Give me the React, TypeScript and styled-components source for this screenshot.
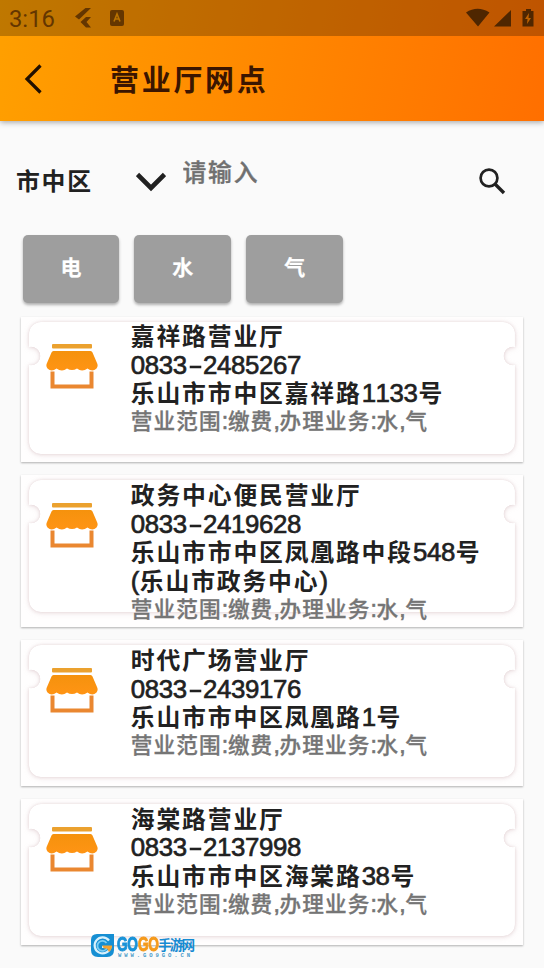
import React from "react";
import styled, { createGlobalStyle } from "styled-components";

const GlobalStyle = createGlobalStyle`
  *, *::before, *::after { box-sizing: border-box; }
  body {
    margin: 0;
    background: #fafafa;
    color: #212121;
    font-family: "Liberation Sans", "Noto Sans CJK SC", sans-serif;
  }
  button { font: inherit; border: 0; padding: 0; background: none; color: inherit; }
`;

const Screen = styled.main`
  width: 544px;
  height: 968px;
  overflow: hidden;
  display: flex;
  flex-direction: column;
`;

const Header = styled.header`
  flex: none;
  height: 121px;
  background: linear-gradient(102deg, #ffa000 0%, #ff6f00 100%);
  box-shadow: 0 1px 6px rgba(0, 0, 0, 0.38);
`;

const StatusBar = styled.div`
  height: 36px;
  padding: 0 9px 0 9px;
  display: flex;
  align-items: center;
  background: rgba(0, 0, 0, 0.25);
  color: #643600;
`;

const Clock = styled.span`
  font: 400 23.8px/36px Roboto, sans-serif;
  width: 66px;
  padding-top: 2px;
`;

const StatusIcons = styled.div<{ $end?: boolean }>`
  display: flex;
  align-items: center;
  gap: ${(p) => (p.$end ? 0 : 18)}px;
  margin-left: ${(p) => (p.$end ? "auto" : 0)};
  color: ${(p) => (p.$end ? "#4f2600" : "#643600")};
  svg { display: block; }
`;

const TitleBar = styled.div`
  height: 85px;
  display: flex;
  align-items: center;
  padding-left: 24px;
`;

const BackButton = styled.button`
  width: 86px;
  display: flex;
`;

const Title = styled.h1`
  margin: 0;
  font: 700 29px/40px "Noto Sans CJK SC", sans-serif;
  letter-spacing: 2.7px;
  color: #3b1500;
  padding-bottom: 2px;
`;

const Filters = styled.section`
  flex: none;
  height: 113.5px;
  padding: 0 38px 0 16px;
  display: flex;
  align-items: center;
`;

const District = styled.button`
  display: flex;
  align-items: center;
  width: 166.5px;
  gap: 43px;
  padding-top: 4px;
  font: 700 23.8px/36px "Noto Sans CJK SC", sans-serif;
  letter-spacing: 1.8px;
  svg { margin-top: 4px; }
`;

const SearchInput = styled.input`
  flex: 1;
  min-width: 0;
  height: 36px;
  margin-bottom: 14.5px;
  padding: 0;
  border: 0;
  outline: 0;
  background: none;
  font: 500 23.8px/36px "Noto Sans CJK SC", sans-serif;
  letter-spacing: 1.8px;
  &::placeholder { color: #707070; opacity: 1; -webkit-text-stroke: 0.4px #707070; }
`;

const SearchButton = styled.button`
  display: flex;
  margin-top: 8px;
`;

const Categories = styled.nav`
  flex: none;
  display: flex;
  gap: 15px;
  padding-left: 22.5px;
  height: 82px;
`;

const CategoryButton = styled.button`
  width: 96.9px;
  height: 68px;
  border-radius: 5px;
  background: #9e9e9e;
  color: #fff;
  font: 700 21px/62px "Noto Sans CJK SC", sans-serif;
  padding-bottom: 5px;
  -webkit-text-stroke: 0.2px #fff;
  box-shadow: 0 2px 3px rgba(0, 0, 0, 0.3);
`;

const List = styled.ul`
  list-style: none;
  margin: 0;
  padding: 0 21px;
  display: flex;
  flex-direction: column;
  gap: 13px;
`;

const Card = styled.li<{ $tall?: boolean }>`
  position: relative;
  height: ${(p) => (p.$tall ? 152 : 145.9)}px;
  padding: 4.4px 0 0 24.5px;
  display: flex;
  background: #fffefe;
  box-shadow: 0 1px 2px rgba(0, 0, 0, 0.3);
`;

/* Coupon-shaped backdrop with a notch bitten out of each side. */
const Ticket = styled.div`
  position: absolute;
  top: 5px;
  left: 8px;
  right: 8px;
  height: 132px;
  filter: drop-shadow(0 0 1.4px rgba(190, 155, 160, 0.26)) drop-shadow(0 1px 2.5px rgba(180, 140, 145, 0.26));
  &::before {
    content: "";
    display: block;
    height: 100%;
    border-radius: 12px;
    background: #fff;
    mask: radial-gradient(circle at 2px 34px, transparent 9px, #000 9.6px) left / 50.2% 100% no-repeat,
      radial-gradient(circle at calc(100% - 2px) 34px, transparent 9px, #000 9.6px) right / 50.2% 100% no-repeat;
  }
`;

const ShopIcon = styled.svg`
  position: relative;
  flex: none;
  margin-top: 22px;
`;

const Details = styled.div`
  position: relative;
  margin-left: 33.3px;
  white-space: nowrap;
`;

const Line = styled.p`
  margin: 0;
  height: 28.75px;
  font: 700 23.8px/28.75px "Noto Sans CJK SC", sans-serif;
  letter-spacing: 1.85px;
`;

const Scope = styled(Line)`
  height: 26px;
  font-size: 21.6px;
  line-height: 25px;
  font-weight: 500;
  letter-spacing: 1.15px;
  color: #757575;
  -webkit-text-stroke: 0.3px #757575;
`;

const Latin = styled.span<{ $small?: boolean }>`
  font-family: "Liberation Sans", sans-serif;
  font-size: ${(p) => (p.$small ? 23 : 25.8)}px;
  line-height: 20px;
  font-weight: 400;
  font-kerning: none;
  letter-spacing: ${(p) => (p.$small ? -0.3 : -0.35)}px;
  margin-right: ${(p) => (p.$small ? 0 : 0.8)}px;
  -webkit-text-stroke: 0.65px currentColor;
`;

const Dash = styled.span`
  display: inline-block;
  width: 16.2px;
  text-align: center;
  transform: scaleX(1.75);
  -webkit-text-stroke: 0.3px currentColor;
`;

const Watermark = styled.aside`
  position: absolute;
  left: 90px;
  top: 933px;
  display: flex;
  gap: 2px;
`;

const WatermarkWords = styled.div`
  display: flex;
  flex-direction: column;
  margin-top: -1px;
`;

const WatermarkName = styled.div`
  display: flex;
  height: 20px;
  font: 700 13.6px/24px "Noto Sans CJK SC", sans-serif;
  letter-spacing: -1.8px;
  color: #168bd2;
`;

const Go = styled.span<{ $tone: string }>`
  width: 20.5px;
  font: 700 19.5px/24px "Liberation Sans", sans-serif;
  letter-spacing: -0.5px;
  color: ${(p) => p.$tone};
  -webkit-text-stroke: 1px ${(p) => p.$tone};
  transform: scaleX(0.7);
  transform-origin: left;
`;

const WatermarkUrl = styled.span`
  font: 700 5.6px/7px "Liberation Mono", monospace;
  letter-spacing: 2.9px;
  color: #4a9bc9;
  white-space: nowrap;
  margin-left: 1px;
`;

function MixedText({ text, small }: { text: string; small?: boolean }) {
  return (
    <>
      {text.split(/([\x20-\x7e]+)/).filter(Boolean).map((part, i) =>
        /^[\x20-\x7e]/.test(part) ? (
          <Latin key={i} $small={small}>
            {part.split(/(-)/).map((s, j) => (s === "-" ? <Dash key={j}>-</Dash> : s))}
          </Latin>
        ) : (
          <React.Fragment key={i}>{part}</React.Fragment>
        )
      )}
    </>
  );
}

function Shop() {
  return (
    <ShopIcon width="52" height="46" viewBox="0 0 52 46">
      <defs>
        <linearGradient id="awning" x1="0" y1="0" x2="0" y2="1">
          <stop offset="0" stopColor="#f5920d" />
          <stop offset="1" stopColor="#ff9414" />
        </linearGradient>
      </defs>
      <rect x="6" y="1" width="40" height="4.500" rx="1" fill="#eba12e" />
      <path
        d="M7.500 8h37q1.500 0 2 1.500l4.500 10.500q1.500 3-.5 5.500-4 4-9 0-5.500 4-10.500 0-5 3-10 0-5 4-10.500 0-5 4-9 0Q-.5 23 1 20L5.500 9.500Q6 8 7.500 8Z"
        fill="url(#awning)"
      />
      <path d="M6.500 28.500v15h39v-15" fill="none" stroke="#ea8730" strokeWidth="4" />
    </ShopIcon>
  );
}

const scope = "营业范围:缴费,办理业务:水,气";
const branches = [
  { name: "嘉祥路营业厅", phone: "0833-2485267", address: ["乐山市市中区嘉祥路1133号"] },
  { name: "政务中心便民营业厅", phone: "0833-2419628", address: ["乐山市市中区凤凰路中段548号", "(乐山市政务中心)"] },
  { name: "时代广场营业厅", phone: "0833-2439176", address: ["乐山市市中区凤凰路1号"] },
  { name: "海棠路营业厅", phone: "0833-2137998", address: ["乐山市市中区海棠路38号"] },
];

export default function App() {
  return (
    <Screen>
      <GlobalStyle />
      <Header>
        <StatusBar>
          <Clock>3:16</Clock>
          <StatusIcons>
            <svg width="17" height="22" viewBox="0 0 17 22" fill="currentColor">
              <path d="M10.500 1H16L4 12.500 0 9.500ZM11 10h5l-4.500 5 4.500 5.500h-5L5.500 15Z" />
            </svg>
            <svg width="14" height="16" viewBox="0 0 14 16">
              <rect width="14" height="16" rx="2" fill="currentColor" />
              <path d="M4 11.500 7 4l3 7.500M5 9h4" fill="none" stroke="#b87200" strokeWidth="1.600" />
            </svg>
          </StatusIcons>
          <StatusIcons $end>
            <svg width="70" height="20" viewBox="0 0 70 20" fill="currentColor">
              <path d="M1 4.500Q12.500-3 24.500 4.500L13 18.500ZM29 18.500 46 2v16.500ZM61 1h5v2h2.500v15.500h-11V3H61Z" />
              <path d="m64 5-4 6h2.500l-.5 5 4-6h-2.500Z" fill="#bd6200" />
            </svg>
          </StatusIcons>
        </StatusBar>
        <TitleBar>
          <BackButton aria-label="返回">
            <svg width="20" height="30" viewBox="0 0 20 30" fill="none" stroke="#211000" strokeWidth="3.200">
              <path d="M16.500 1.500 3 15l13.500 13.500" />
            </svg>
          </BackButton>
          <Title>营业厅网点</Title>
        </TitleBar>
      </Header>

      <Filters>
        <District>
          市中区
          <svg width="30" height="20" viewBox="0 0 30 20" fill="none" stroke="#212121" strokeWidth="4.600">
            <path d="m1.500 2.500 13.500 13.500 13.500-13.500" />
          </svg>
        </District>
        <SearchInput placeholder="请输入" />
        <SearchButton aria-label="搜索">
          <svg width="27" height="27" viewBox="0 0 27 27" fill="none" stroke="#212121" strokeWidth="2.700">
            <circle cx="10" cy="10" r="8.400" />
            <path d="m16 16 9 9" strokeWidth="3.400" />
          </svg>
        </SearchButton>
      </Filters>

      <Categories>
        <CategoryButton>电</CategoryButton>
        <CategoryButton>水</CategoryButton>
        <CategoryButton>气</CategoryButton>
      </Categories>

      <List>
        {branches.map((b) => (
          <Card key={b.phone} $tall={b.address.length > 1}>
            <Ticket />
            <Shop />
            <Details>
              <Line><MixedText text={b.name} /></Line>
              <Line><MixedText text={b.phone} /></Line>
              {b.address.map((line) => (
                <Line key={line}><MixedText text={line} /></Line>
              ))}
              <Scope><MixedText text={scope} small /></Scope>
            </Details>
          </Card>
        ))}
      </List>

      <Watermark>
        <svg width="25" height="25" viewBox="0 0 25 25">
          <path d="M7 1h17v16q0 7-7 7H8q-7 0-7-7V7q0-6 6-6Z" fill="#168fd3" />
          <path d="M19 7.500A8 8 0 1 0 20.500 14H12" fill="none" stroke="#d8f1fc" strokeWidth="2.200" />
          <path d="M16.500 10a5 5 0 1 0 .5 5" fill="none" stroke="#7ccdf2" strokeWidth="1.800" />
          <path d="M12 12.500h10q0 4-3 6.500l-2-3.500h-3Z" fill="#f5a330" />
        </svg>
        <WatermarkWords>
          <WatermarkName>
            <Go $tone="#1a93d8">GO</Go>
            <Go $tone="#f59a1c">GO</Go>
            <span>手游网</span>
          </WatermarkName>
          <WatermarkUrl>WWW.GO9GO.CN</WatermarkUrl>
        </WatermarkWords>
      </Watermark>
    </Screen>
  );
}
